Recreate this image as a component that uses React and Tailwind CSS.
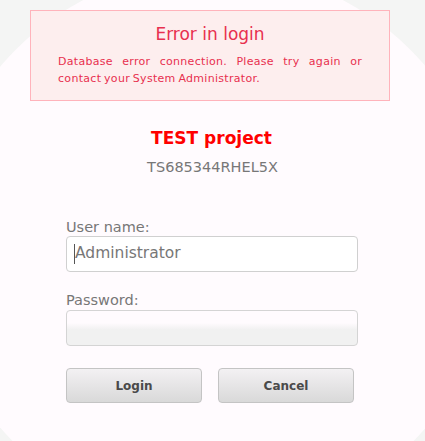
export default function App() {
  return (
    <div className="relative w-[425px] h-[441px] overflow-hidden bg-[#f4f5f4] font-['DejaVu_Sans',Verdana,sans-serif]">
      <div className="absolute left-[-66px] top-[-32px] w-[558px] h-[558px] rounded-full bg-[#fffbfe]" />

      <div className="relative flex flex-col pt-[10px]">
        {/* Error box */}
        <div className="ml-[30px] w-[360px] h-[91px] border border-[#ffb3bb] bg-[#fdeeee] px-[27px] pt-[12px]">
          <h2 className="text-center text-[17px] leading-[22px] text-[#e8304f]">Error in login</h2>
          <p className="mt-[8px] text-[11px] leading-[17px] tracking-[0.3px] [word-spacing:-1px] text-[#e8304f] text-justify [text-align-last:left]">
            Database error connection. Please try again or contact your System Administrator.
          </p>
        </div>

        {/* Project */}
        <h1 className="mt-[26px] ml-[-2px] text-center text-[17px] leading-[22px] font-bold text-[#ff0000]">TEST project</h1>
        <div className="mt-[9px] text-center text-[14.5px] leading-[18px] text-[#777]">TS685344RHEL5X</div>

        {/* Form */}
        <div className="mt-[42px] ml-[66px] w-[292px] flex flex-col">
          <label className="text-[14.5px] leading-[18px] text-[#777]">User name:</label>
          <div className="h-[36px] rounded-[4px] border border-[#d0d0d0] bg-white flex items-center px-[7px]">
            <span className="w-px h-[20px] bg-[#555]" />
            <span className="text-[15.5px] text-[#777]">Administrator</span>
          </div>

          <label className="mt-[19px] text-[14.5px] leading-[18px] text-[#777]">Password:</label>
          <div className="mt-[1px] h-[36px] rounded-[4px] border border-[#d4d4d4] bg-gradient-to-b from-[#fffbfe] from-35% to-[#f1f1f1] to-55%" />

          <div className="mt-[22px] flex gap-[16px]">
            <button className="w-[136px] h-[35px] rounded-[4px] border border-[#c4c4c4] bg-gradient-to-b from-[#f3f1f3] to-[#d9d9d9] text-[12px] font-bold text-[#4a4a4a]">
              Login
            </button>
            <button className="w-[136px] h-[35px] rounded-[4px] border border-[#c4c4c4] bg-gradient-to-b from-[#f3f1f3] to-[#d9d9d9] text-[12px] font-bold text-[#4a4a4a]">
              Cancel
            </button>
          </div>
        </div>
      </div>
    </div>
  );
}
